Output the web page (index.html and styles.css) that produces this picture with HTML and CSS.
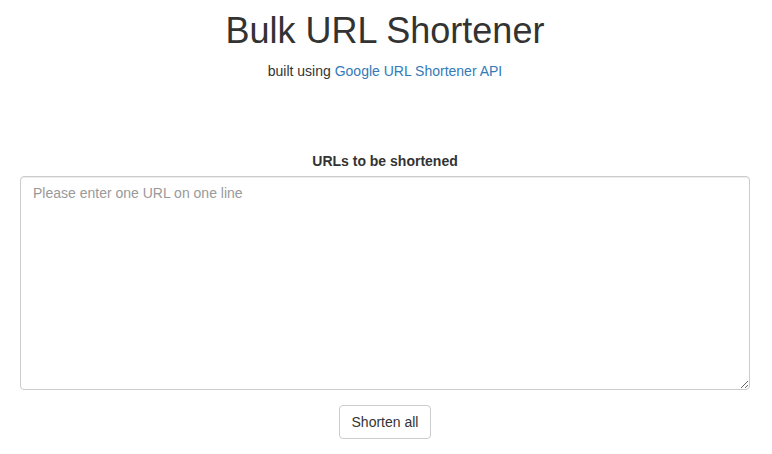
FILE: index.html
```html
<!DOCTYPE html>
<html>
<head>
<meta charset="utf-8">
<link rel="stylesheet" href="styles.css">
</head>
<body>
<div class="page">
  <header class="head">
    <h1 class="title">Bulk URL Shortener</h1>
    <p class="sub">built using <a href="#" class="link">Google URL Shortener API</a></p>
  </header>
  <form class="form">
    <div class="group">
      <label class="label" for="urls">URLs to be shortened</label>
      <textarea id="urls" class="control" placeholder="Please enter one URL on one line"></textarea>
    </div>
    <div class="actions">
      <button type="button" class="btn">Shorten all</button>
    </div>
  </form>
</div>
</body>
</html>
```
FILE: styles.css
```css
* { box-sizing: border-box; }
html, body { margin: 0; padding: 0; background: #fff; }
body {
  font-family: "Liberation Sans", Arial, sans-serif;
  font-size: 14px;
  line-height: 20px;
  color: #333;
}
.page { padding: 0 22px 0 20px; }
.head { text-align: center; }
.title {
  font-size: 36px;
  font-weight: 500;
  line-height: 1.1;
  margin: 11px 0 10px;
}
.sub { margin: 0 0 70px; }
.link { color: #337ab7; text-decoration: none; }
.group { margin-bottom: 15px; display: flex; flex-direction: column; }
.label {
  font-weight: bold;
  text-align: center;
  margin-bottom: 5px;
}
.control {
  display: block;
  width: 100%;
  height: 214px;
  padding: 6px 12px;
  font-family: inherit;
  font-size: 14px;
  line-height: 20px;
  color: #555;
  background: #fff;
  border: 1px solid #ccc;
  border-radius: 4px;
  box-shadow: inset 0 1px 1px rgba(0,0,0,.075);
  resize: vertical;
}
.control::placeholder { color: #999; }
.actions { display: flex; justify-content: center; }
.btn {
  font-family: inherit;
  font-size: 14px;
  line-height: 20px;
  padding: 6px 12px;
  color: #333;
  background: #fff;
  border: 1px solid #ccc;
  border-radius: 4px;
  cursor: pointer;
}
```
